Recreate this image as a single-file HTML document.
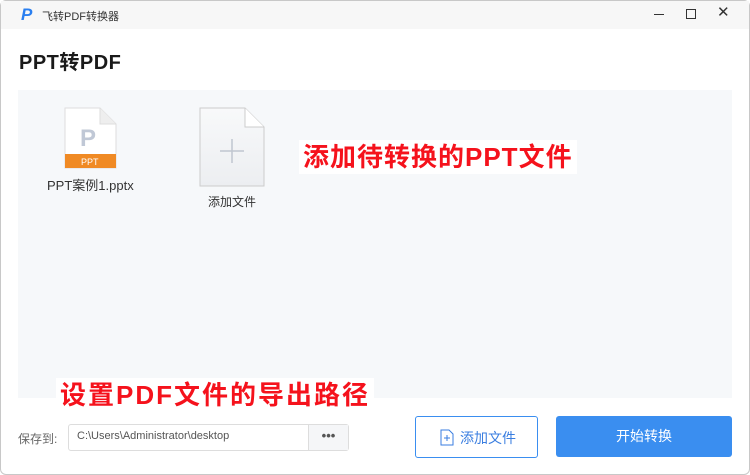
<!DOCTYPE html><html><head><meta charset="utf-8"><style>
body{margin:0;width:750px;height:475px;overflow:hidden;background:#fff;font-family:"Liberation Sans","Noto Sans CJK SC",sans-serif;position:relative}
.a{position:absolute}
.red{color:#f5121c;font-weight:bold;font-size:26px;background:#fff;letter-spacing:1px;line-height:34px}
</style></head><body>
<div class="a" style="left:0;top:0;width:748px;height:473px;border:1px solid #c8c8c8;border-radius:6px"></div>
<div class="a" style="left:1px;top:1px;width:748px;height:28px;background:#f7f7f7"></div>
<div class="a" style="left:21px;top:5px;font-size:17px;font-weight:bold;font-style:italic;color:#2a7ff0">P</div>
<div class="a" style="left:42px;top:8px;font-size:11px;color:#333">飞转PDF转换器</div>
<div class="a" style="left:654px;top:14px;width:10px;height:1px;background:#333"></div>
<div class="a" style="left:686px;top:9px;width:8px;height:8px;border:1px solid #333"></div>
<div class="a" style="left:717px;top:3px;font-size:15px;color:#333">✕</div>
<div class="a" style="left:19px;top:46px;font-size:20px;font-weight:bold;color:#1a1a1a;letter-spacing:0.5px">PPT转PDF</div>
<div class="a" style="left:18px;top:90px;width:714px;height:308px;background:#f6f8fa"></div>
<svg class="a" style="left:64px;top:107px" width="54" height="62"><path d="M1 1H36L52 17V61H1Z" fill="#fff" stroke="#ddd"/><path d="M36 1V17H52" fill="#eee" stroke="#ddd"/><text x="16" y="39" font-size="24" font-weight="bold" fill="#c0c8d6" font-family="Liberation Sans">P</text><rect x="1" y="47" width="51" height="14" fill="#f08a24"/><text x="17" y="58" font-size="9" fill="#fff" font-family="Liberation Sans">PPT</text></svg>
<div class="a" style="left:47px;top:175px;font-size:13px;color:#333">PPT案例1.pptx</div>
<svg class="a" style="left:199px;top:107px" width="67" height="80"><defs><linearGradient id="g" x1="0" y1="0" x2="0" y2="1"><stop offset="0" stop-color="#f8f9fa"/><stop offset="1" stop-color="#eceef1"/></linearGradient></defs><path d="M1 1H46L65 20V79H1Z" fill="url(#g)" stroke="#ccc"/><path d="M46 1V20H65" fill="#fff" stroke="#ccc"/><path d="M33 32V56M21 44H45" stroke="#c0c6d0" stroke-width="1.5"/></svg>
<div class="a" style="left:208px;top:193px;font-size:12px;color:#333">添加文件</div>
<div class="a red" style="left:299px;top:140px;padding:0 4px">添加待转换的PPT文件</div>
<div class="a red" style="left:56px;top:378px;padding:0 4px;letter-spacing:2px">设置PDF文件的导出路径</div>
<div class="a" style="left:18px;top:430px;font-size:12px;color:#666">保存到:</div>
<div class="a" style="left:68px;top:424px;width:279px;height:25px;border:1px solid #ddd;border-radius:3px;background:#fff"></div>
<div class="a" style="left:308px;top:425px;width:39px;height:25px;background:#f5f6f8;border-left:1px solid #ddd;text-align:center;font-size:13px;line-height:22px;color:#555;font-weight:bold">•••</div>
<div class="a" style="left:77px;top:430px;font-size:11px;color:#555">C:\Users\Administrator\desktop</div>
<div class="a" style="left:415px;top:416px;width:121px;height:40px;border:1px solid #3a8ef0;border-radius:3px;background:#fff"></div>
<svg class="a" style="left:440px;top:429px" width="14" height="17"><path d="M1 1H9L13 5V16H1Z" fill="none" stroke="#3a7ee0"/><path d="M7 6V12M4 9H10" stroke="#3a7ee0"/></svg>
<div class="a" style="left:460px;top:428px;font-size:14px;color:#3a7ee0">添加文件</div>
<div class="a" style="left:556px;top:416px;width:176px;height:41px;background:#3a8ef0;border-radius:3px;color:#fff;font-size:14px;text-align:center;line-height:41px">开始转换</div>
</body></html>
